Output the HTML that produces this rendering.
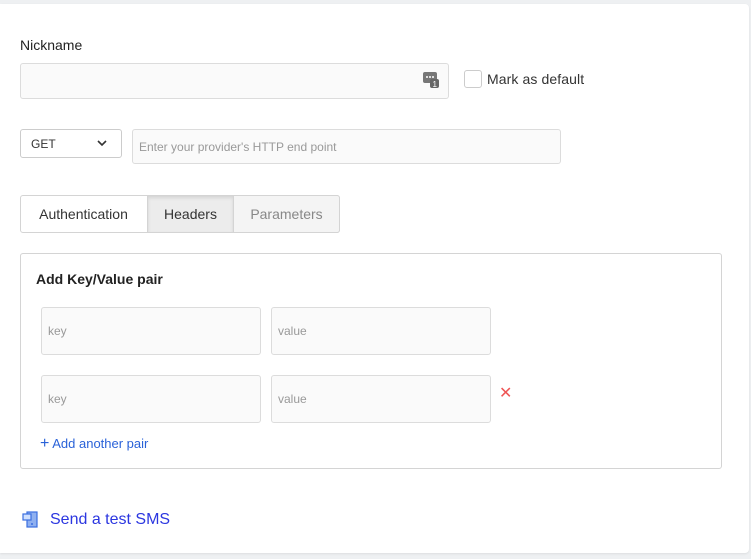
<!DOCTYPE html><html><head><style>
body{margin:0;width:751px;height:559px;background:#eef0f2;font-family:"Liberation Sans",sans-serif;position:relative;overflow:hidden}
.card{position:absolute;left:0;top:4px;width:749px;height:549px;background:#fff;border-radius:0 4px 4px 0;box-shadow:0 1px 2px rgba(0,0,0,.08)}
.a{position:absolute}
.inp{position:absolute;border:1px solid #dcdcdc;border-radius:3px;background:#fafafa;box-sizing:border-box;color:#999;font-size:12px;padding-left:6px;display:flex;align-items:center}
</style></head><body><div class="card"></div>
<div class="a" style="left:20px;top:37px;font-size:14px;color:#222">Nickname</div>
<div class="inp" style="left:20px;top:63px;width:429px;height:36px"></div>
<svg class="a" style="left:423px;top:72px" width="17" height="17"><rect x="0" y="0" width="14" height="11" rx="2" fill="#777"/><rect x="7" y="7" width="9" height="9" rx="2" fill="#666"/><text x="9.5" y="15" font-size="8" fill="#fff" font-family="Liberation Sans">1</text><circle cx="4" cy="5" r="1" fill="#fff"/><circle cx="7" cy="5" r="1" fill="#fff"/><circle cx="10" cy="5" r="1" fill="#fff"/></svg>
<div class="a" style="left:464px;top:70px;width:16px;height:16px;border:1px solid #ccc;border-radius:3px;background:#fff"></div>
<div class="a" style="left:487px;top:71px;font-size:14px;color:#333;letter-spacing:0.1px">Mark as default</div>
<div class="a" style="left:20px;top:129px;width:102px;height:29px;border:1px solid #ccc;border-radius:3px;box-sizing:border-box;font-size:12px;color:#333;padding:7px 10px">GET</div>
<svg class="a" style="left:97px;top:139px" width="10" height="8"><path d="M1 2l4 4 4-4" stroke="#333" stroke-width="1.6" fill="none"/></svg>
<div class="inp" style="left:132px;top:129px;width:429px;height:35px">Enter your provider's HTTP end point</div>
<div class="a" style="left:20px;top:195px;width:320px;height:38px;border:1px solid #d4d4d4;border-radius:3px;box-sizing:border-box"></div>
<div class="a" style="left:20px;top:195px;width:127px;height:38px;display:flex;align-items:center;justify-content:center;font-size:14px;color:#333">Authentication</div>
<div class="a" style="left:147px;top:195px;width:87px;height:38px;box-sizing:border-box;border:1px solid #d4d4d4;background:#ececec;display:flex;align-items:center;justify-content:center;font-size:14px;color:#333;box-shadow:inset 0 2px 3px rgba(0,0,0,.1)">Headers</div>
<div class="a" style="left:234px;top:195px;width:106px;height:38px;background:#f4f4f4;border-radius:0 3px 3px 0;border:1px solid #d4d4d4;border-left:none;box-sizing:border-box;display:flex;align-items:center;justify-content:center;font-size:14px;color:#888">Parameters</div>
<div class="a" style="left:20px;top:253px;width:702px;height:216px;border:1px solid #d4d4d4;border-radius:3px;box-sizing:border-box"></div>
<div class="a" style="left:36px;top:271px;font-size:14px;color:#222;font-weight:bold">Add Key/Value pair</div>
<div class="inp" style="left:41px;top:307px;width:220px;height:48px">key</div>
<div class="inp" style="left:271px;top:307px;width:220px;height:48px">value</div>
<div class="inp" style="left:41px;top:375px;width:220px;height:48px">key</div>
<div class="inp" style="left:271px;top:375px;width:220px;height:48px">value</div>
<div class="a" style="left:499px;top:383px;font-size:16px;color:#e55">✕</div>
<div class="a" style="left:40px;top:435px;font-size:13px;color:#2a62d8"><span style="font-size:16px">+</span> Add another pair</div>
<svg class="a" style="left:22px;top:511px" width="17" height="17"><rect x="5" y="1" width="10" height="15" fill="#8fb0f0" stroke="#3b6fe0" stroke-width="1.2"/><rect x="1" y="3" width="8" height="6" fill="#cfe0ff" stroke="#3b6fe0" stroke-width="1.2"/><circle cx="10" cy="13" r="1" fill="#3b6fe0"/></svg>
<div class="a" style="left:50px;top:511px;font-size:16px;color:#2b36e0">Send a test SMS</div>
</body></html>
